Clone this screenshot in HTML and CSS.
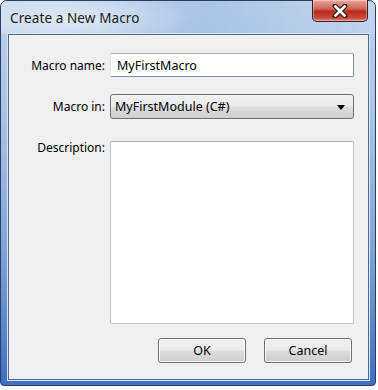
FILE: index.html
```html
<!DOCTYPE html>
<html>
<head>
<meta charset="utf-8">
<link rel="stylesheet" href="styles.css">
</head>
<body>
<div class="window">
  <div class="titlebar">
    <span class="title">Create a New Macro</span>
    <div class="close">
      <svg width="16" height="14" viewBox="0 0 16 14">
        <path d="M3 2 L13 12 M13 2 L3 12" stroke="#3a2020" stroke-width="5" stroke-linecap="round"/>
        <path d="M3.5 2.5 L12.5 11.5 M12.5 2.5 L3.5 11.5" stroke="#ffffff" stroke-width="2.6" stroke-linecap="square"/>
      </svg>
    </div>
  </div>
  <div class="client">
    <div class="form">
      <label class="lbl lbl-name">Macro name:</label>
      <div class="input">MyFirstMacro</div>
      <label class="lbl lbl-in">Macro in:</label>
      <div class="select"><span>MyFirstModule (C#)</span><span class="arrow"></span></div>
      <label class="lbl lbl-desc">Description:</label>
      <div class="textarea"></div>
    </div>
    <div class="buttons">
      <div class="btn">OK</div>
      <div class="btn">Cancel</div>
    </div>
  </div>
</div>
</body>
</html>
```
FILE: styles.css
```css
html, body {
  margin: 0;
  padding: 0;
  background: #ffffff;
}
body {
  font-family: "Noto Sans", "DejaVu Sans", sans-serif;
  font-size: 12px;
  color: #000;
}
.window {
  width: 374px;
  height: 384px;
  border: 1px solid #2b3f5c;
  border-radius: 7px 7px 4px 4px;
  background: linear-gradient(180deg, #bcd2ec 0%, #a9c3e4 30%, #7fa4d8 65%, #3f6fc2 100%);
  display: flex;
  flex-direction: column;
  box-sizing: content-box;
}
.titlebar {
  height: 33px;
  display: flex;
  align-items: flex-start;
  justify-content: space-between;
  background: radial-gradient(ellipse 120px 30px at 70px 18px, rgba(255,255,255,0.55), rgba(255,255,255,0) 100%),
              linear-gradient(90deg, rgba(255,255,255,0.15), rgba(90,130,200,0.15) 55%, rgba(255,255,255,0.1));
  border-radius: 6px 6px 0 0;
}
.title {
  margin: 8px 0 0 9px;
  font-size: 13.5px;
  color: #1a1a1a;
  letter-spacing: 0.1px;
}
.close {
  width: 54px;
  height: 21px;
  margin-right: 7px;
  margin-top: -1px;
  border: 1px solid #3b1c1c;
  border-top: none;
  border-radius: 0 0 5px 5px;
  background: linear-gradient(180deg, #e8a89a 0%, #d06a5a 40%, #b8281c 55%, #c84a3c 85%, #e08878 100%);
  display: flex;
  align-items: center;
  justify-content: center;
  box-shadow: inset 0 0 0 1px rgba(255,255,255,0.35);
}
.client {
  margin: 0 6px 5px 7px;
  flex: 1;
  background: #f0f0f0;
  border: 1px solid #4e6a94;
  box-shadow: 0 0 0 1px #dbe6f4;
  display: flex;
  flex-direction: column;
}
.form {
  display: grid;
  grid-template-columns: 96px 244px;
  column-gap: 5px;
  padding: 18px 0 0 0;
}
.lbl {
  text-align: right;
  color: #000;
}
.lbl-name { align-self: center; }
.lbl-in { align-self: center; margin-top: 17px; }
.lbl-desc { margin-top: 20px; }
.input {
  height: 22px;
  border: 1px solid #7a8fb0;
  border-top-color: #abadb3;
  border-left-color: #e2e3ea;
  border-radius: 2px;
  background: #fff;
  padding-left: 6px;
  display: flex;
  align-items: center;
  font-size: 12.5px;
}
.select {
  margin-top: 17px;
  height: 23px;
  border: 1px solid #707070;
  border-radius: 3px;
  background: linear-gradient(180deg, #f2f2f2 0%, #ebebeb 48%, #dddddd 52%, #cfcfcf 100%);
  display: flex;
  align-items: center;
  justify-content: space-between;
  padding: 0 8px 0 4px;
  font-size: 12.5px;
}
.arrow {
  width: 0;
  height: 0;
  border-left: 4px solid transparent;
  border-right: 4px solid transparent;
  border-top: 5px solid #000;
  margin-top: 1px;
}
.textarea {
  margin-top: 22px;
  height: 181px;
  border: 1px solid #c0c4cc;
  border-top-color: #abadb3;
  border-radius: 2px;
  background: #fff;
}
.buttons {
  display: flex;
  justify-content: flex-end;
  gap: 18px;
  padding: 14px 16px 0 0;
}
.btn {
  width: 86px;
  height: 23px;
  border: 1px solid #707070;
  border-radius: 3px;
  background: linear-gradient(180deg, #f2f2f2 0%, #ebebeb 48%, #dddddd 52%, #cfcfcf 100%);
  box-shadow: inset 0 0 0 1px rgba(255,255,255,0.8);
  display: flex;
  align-items: center;
  justify-content: center;
  font-size: 12.5px;
}
```
